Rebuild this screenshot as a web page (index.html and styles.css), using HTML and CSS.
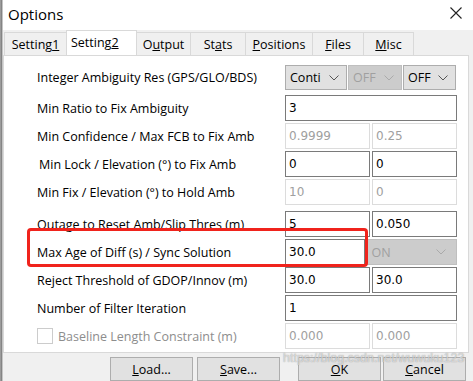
FILE: index.html
```html
<!DOCTYPE html>
<html>
<head>
<meta charset="utf-8">
<link rel="stylesheet" href="styles.css">
</head>
<body>
<div class="win">
  <div class="edge"></div>
  <div class="main">
    <div class="titlebar">
      <span class="title">Options</span>
      <svg class="close" width="12" height="12" viewBox="0 0 12 12"><path d="M0.5 0.5 L11.5 11.5 M11.5 0.5 L0.5 11.5" stroke="#222" stroke-width="1.1" fill="none"/></svg>
    </div>
    <div class="client">
      <div class="tabs">
        <div class="tab t1"><span>Setting<u>1</u></span></div>
        <div class="tab t2 sel"><span>Setting<u>2</u></span></div>
        <div class="tab t3"><span>O<u>u</u>tput</span></div>
        <div class="tab t4"><span>St<u>a</u>ts</span></div>
        <div class="tab t5"><span><u>P</u>ositions</span></div>
        <div class="tab t6"><span><u>F</u>iles</span></div>
        <div class="tab t7"><span><u>M</u>isc</span></div>
      </div>
      <div class="panel">
        <div class="row first">
          <div class="label">Integer Ambiguity Res (GPS/GLO/BDS)</div>
          <div class="ctrl three">
            <div class="sel w62">Conti<svg class="chev" width="10" height="6" viewBox="0 0 10 6"><polyline points="0.5,0.5 5,5 9.5,0.5" fill="none" stroke="#555" stroke-width="1"/></svg></div>
            <div class="sel dis w54">OFF<svg class="chev" width="10" height="6" viewBox="0 0 10 6"><polyline points="0.5,0.5 5,5 9.5,0.5" fill="none" stroke="#aaa" stroke-width="1"/></svg></div>
            <div class="sel w53">OFF<svg class="chev" width="10" height="6" viewBox="0 0 10 6"><polyline points="0.5,0.5 5,5 9.5,0.5" fill="none" stroke="#555" stroke-width="1"/></svg></div>
          </div>
        </div>
        <div class="row">
          <div class="label">Min Ratio to Fix Ambiguity</div>
          <div class="ctrl"><div class="inp full">3</div></div>
        </div>
        <div class="row">
          <div class="label">Min Confidence / Max FCB to Fix Amb</div>
          <div class="ctrl two"><div class="inp dis">0.9999</div><div class="inp dis">0.25</div></div>
        </div>
        <div class="row">
          <div class="label ind">Min Lock / Elevation (°) to Fix Amb</div>
          <div class="ctrl two"><div class="inp">0</div><div class="inp">0</div></div>
        </div>
        <div class="row">
          <div class="label">Min Fix / Elevation (°) to Hold Amb</div>
          <div class="ctrl two"><div class="inp dis">10</div><div class="inp dis">0</div></div>
        </div>
        <div class="row gapped">
          <div class="label">Outage to Reset Amb/Slip Thres (m)</div>
          <div class="ctrl two"><div class="inp">5</div><div class="inp">0.050</div></div>
        </div>
        <div class="row">
          <div class="label">Max Age of Diff (s) / Sync Solution</div>
          <div class="ctrl two"><div class="inp">30.0</div><div class="sel dis wide">ON<svg class="chev" width="10" height="6" viewBox="0 0 10 6"><polyline points="0.5,0.5 5,5 9.5,0.5" fill="none" stroke="#aaa" stroke-width="1"/></svg></div></div>
        </div>
        <div class="row">
          <div class="label">Reject Threshold of GDOP/Innov (m)</div>
          <div class="ctrl two"><div class="inp">30.0</div><div class="inp">30.0</div></div>
        </div>
        <div class="row">
          <div class="label">Number of Filter Iteration</div>
          <div class="ctrl"><div class="inp full">1</div></div>
        </div>
        <div class="row">
          <div class="label chk"><span class="box"></span><span class="dtext">Baseline Length Constraint (m)</span></div>
          <div class="ctrl two"><div class="inp dis">0.000</div><div class="inp dis">0.000</div></div>
        </div>
      </div>
      <div class="buttons">
        <div class="btn b1"><span><u>L</u>oad...</span></div>
        <div class="btn b2"><span><u>S</u>ave...</span></div>
        <div class="btn b3"><span><u>O</u>K</span></div>
        <div class="btn b4"><span><u>C</u>ancel</span></div>
      </div>
    </div>
  </div>
  <div class="highlight"></div>
  <div class="watermark">https://blog.csdn.net/wuwuku123</div>
</div>
</body>
</html>
```

FILE: styles.css
```css
* { box-sizing: border-box; }
html, body { margin: 0; padding: 0; }
body { width: 473px; height: 381px; overflow: hidden; background: #f0f0f0; font-family: "Open Sans", "Noto Sans", sans-serif; }
.win { position: relative; width: 473px; height: 381px; display: flex; overflow: hidden; }
.edge { width: 3px; background: linear-gradient(to right, #c8c8c8 0, #6f6f6f 1px, #9a9a9a 2px, #f0f0f0 3px); }
.main { flex: 1; display: flex; flex-direction: column; }
.titlebar { height: 30px; background: #fff; display: flex; align-items: center; justify-content: space-between; padding: 0 11px 0 5px; }
.title { font-family: "Open Sans", sans-serif; font-size: 15px; color: #000; margin-top: -2px; }
.close { margin-top: -4px; }
.client { flex: 1; background: #f0f0f0; display: flex; flex-direction: column; }
.tabs { display: flex; height: 25px; padding-left: 1px; align-items: flex-end; font-size: 12.5px; }
.tab { height: 23px; border: 1px solid #d9d9d9; border-bottom: none; background: #f0f0f0; display: flex; align-items: center; justify-content: center; margin-right: -1px; color: #000; padding-top: 1px; white-space: nowrap; }
.tab.sel { height: 26px; background: #fff; position: relative; z-index: 2; margin-bottom: -1px; padding-bottom: 2px; border-color: #d9d9d9; }
.t1 { width: 63px; }
.t2 { width: 71px; }
.t3 { width: 55px; }
.t4 { width: 56px; }
.t5 { width: 68px; }
.t6 { width: 52px; }
.t7 { width: 51px; }
.panel { background: #fff; border: 1px solid #d9d9d9; width: 466px; padding: 9px 11px 3px 33px; display: flex; flex-direction: column; gap: 2px; }
.row { display: flex; align-items: center; height: 26px; }
.row.first { height: 25px; margin-bottom: 3px; }
.row.gapped { margin-top: 4px; }
.label { flex: 1; font-size: 12.5px; color: #000; white-space: nowrap; }
.label.ind { padding-left: 2px; }
.ctrl { width: 172px; height: 100%; display: flex; gap: 2px; font-family: "DejaVu Sans", sans-serif; font-size: 12px; }
.ctrl.three { gap: 1px; }
.inp { flex: 1; height: 100%; border: 1px solid #7a7a7a; background: #fff; display: flex; align-items: center; padding-left: 3px; color: #000; }
.inp.full { flex: 1; }
.inp.dis { border-color: #dcdcdc; color: #a0a0a0; }
.sel { height: 100%; background: #e1e1e1; border: 1px solid #adadad; display: flex; align-items: center; justify-content: space-between; padding: 0 7px 0 4px; font-family: "Open Sans", sans-serif; font-size: 12.5px; color: #000; }
.sel.dis { background: #cccccc; border-color: #bfbfbf; color: #a0a0a0; }
.sel.wide { flex: 1; padding-right: 10px; }
.w62 { width: 62px; }
.w54 { width: 54px; }
.w53 { width: 53px; }
.chk { display: flex; align-items: center; }
.box { width: 16px; height: 16px; border: 1px solid #cccccc; background: #fff; margin-right: 5px; }
.dtext { color: #8d8d8d; }
.buttons { display: flex; padding-top: 4px; padding-left: 107px; font-size: 12.5px; }
.btn { width: 83px; height: 24px; background: #e1e1e1; border: 1px solid #adadad; display: flex; align-items: center; justify-content: center; color: #000; white-space: nowrap; }
.b2 { margin-left: 4px; }
.b3 { margin-left: 18px; }
.b4 { margin-left: 2px; }
.highlight { position: absolute; left: 27px; top: 228px; width: 341px; height: 39px; border: 3px solid #f0231c; border-radius: 4px; }
.watermark { position: absolute; left: 283px; top: 351px; white-space: nowrap; font-family: "Liberation Sans", sans-serif; font-size: 12.5px; color: rgba(255,255,255,0.6); text-shadow: 0 0 1px rgba(110,110,110,0.8); pointer-events: none; }
```
